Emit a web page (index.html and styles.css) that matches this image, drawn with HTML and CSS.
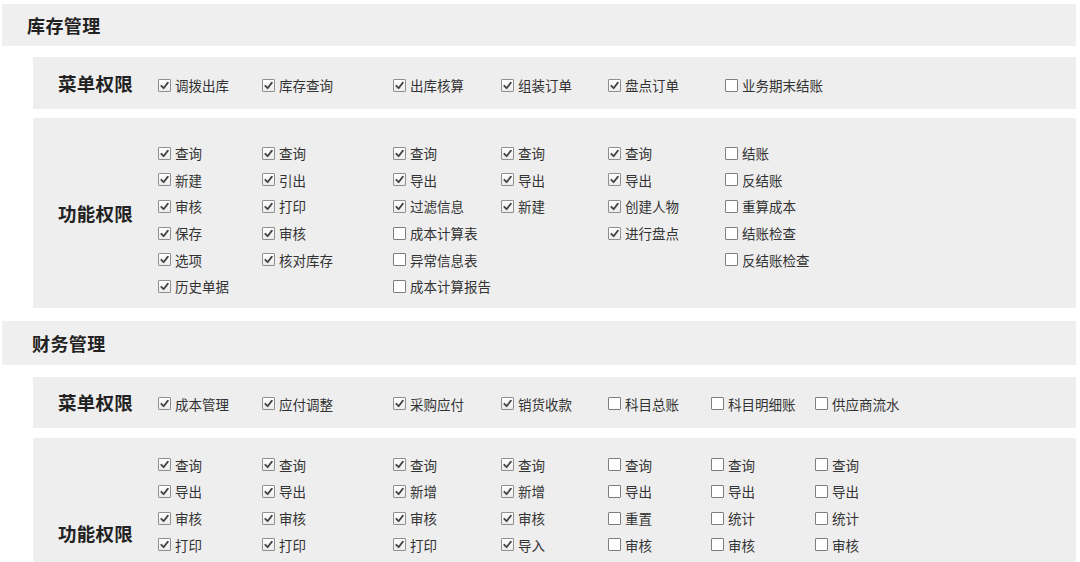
FILE: index.html
```html
<!DOCTYPE html>
<html lang="zh">
<head>
<meta charset="utf-8">
<link rel="stylesheet" href="styles.css">
</head>
<body>
<svg width="0" height="0" class="defs">
  <defs>
    <symbol id="ck" viewBox="0 0 11 11">
      <path d="M2.3 5.8 L4.6 8.2 L8.9 2.6" fill="none" stroke="#444" stroke-width="1.8" stroke-linecap="round" stroke-linejoin="round"/>
    </symbol>
  </defs>
</svg>

<section class="section s1">
  <div class="head h1">库存管理</div>
  <div class="box menu m1">
    <div class="label">菜单权限</div>
    <div class="cols c1">
      <div class="col"><div class="item on"><span class="cb"><svg><use href="#ck"/></svg></span>调拨出库</div></div>
      <div class="col"><div class="item on"><span class="cb"><svg><use href="#ck"/></svg></span>库存查询</div></div>
      <div class="col"><div class="item on"><span class="cb"><svg><use href="#ck"/></svg></span>出库核算</div></div>
      <div class="col"><div class="item on"><span class="cb"><svg><use href="#ck"/></svg></span>组装订单</div></div>
      <div class="col"><div class="item on"><span class="cb"><svg><use href="#ck"/></svg></span>盘点订单</div></div>
      <div class="col"><div class="item"><span class="cb"></span>业务期末结账</div></div>
    </div>
  </div>
  <div class="box func f1">
    <div class="label">功能权限</div>
    <div class="cols c1">
      <div class="col">
        <div class="item on"><span class="cb"><svg><use href="#ck"/></svg></span>查询</div>
        <div class="item on"><span class="cb"><svg><use href="#ck"/></svg></span>新建</div>
        <div class="item on"><span class="cb"><svg><use href="#ck"/></svg></span>审核</div>
        <div class="item on"><span class="cb"><svg><use href="#ck"/></svg></span>保存</div>
        <div class="item on"><span class="cb"><svg><use href="#ck"/></svg></span>选项</div>
        <div class="item on"><span class="cb"><svg><use href="#ck"/></svg></span>历史单据</div>
      </div>
      <div class="col">
        <div class="item on"><span class="cb"><svg><use href="#ck"/></svg></span>查询</div>
        <div class="item on"><span class="cb"><svg><use href="#ck"/></svg></span>引出</div>
        <div class="item on"><span class="cb"><svg><use href="#ck"/></svg></span>打印</div>
        <div class="item on"><span class="cb"><svg><use href="#ck"/></svg></span>审核</div>
        <div class="item on"><span class="cb"><svg><use href="#ck"/></svg></span>核对库存</div>
      </div>
      <div class="col">
        <div class="item on"><span class="cb"><svg><use href="#ck"/></svg></span>查询</div>
        <div class="item on"><span class="cb"><svg><use href="#ck"/></svg></span>导出</div>
        <div class="item on"><span class="cb"><svg><use href="#ck"/></svg></span>过滤信息</div>
        <div class="item"><span class="cb"></span>成本计算表</div>
        <div class="item"><span class="cb"></span>异常信息表</div>
        <div class="item"><span class="cb"></span>成本计算报告</div>
      </div>
      <div class="col">
        <div class="item on"><span class="cb"><svg><use href="#ck"/></svg></span>查询</div>
        <div class="item on"><span class="cb"><svg><use href="#ck"/></svg></span>导出</div>
        <div class="item on"><span class="cb"><svg><use href="#ck"/></svg></span>新建</div>
      </div>
      <div class="col">
        <div class="item on"><span class="cb"><svg><use href="#ck"/></svg></span>查询</div>
        <div class="item on"><span class="cb"><svg><use href="#ck"/></svg></span>导出</div>
        <div class="item on"><span class="cb"><svg><use href="#ck"/></svg></span>创建人物</div>
        <div class="item on"><span class="cb"><svg><use href="#ck"/></svg></span>进行盘点</div>
      </div>
      <div class="col">
        <div class="item"><span class="cb"></span>结账</div>
        <div class="item"><span class="cb"></span>反结账</div>
        <div class="item"><span class="cb"></span>重算成本</div>
        <div class="item"><span class="cb"></span>结账检查</div>
        <div class="item"><span class="cb"></span>反结账检查</div>
      </div>
    </div>
  </div>
</section>

<section class="section s2">
  <div class="head h2">财务管理</div>
  <div class="box menu m2">
    <div class="label">菜单权限</div>
    <div class="cols c2">
      <div class="col"><div class="item on"><span class="cb"><svg><use href="#ck"/></svg></span>成本管理</div></div>
      <div class="col"><div class="item on"><span class="cb"><svg><use href="#ck"/></svg></span>应付调整</div></div>
      <div class="col"><div class="item on"><span class="cb"><svg><use href="#ck"/></svg></span>采购应付</div></div>
      <div class="col"><div class="item on"><span class="cb"><svg><use href="#ck"/></svg></span>销货收款</div></div>
      <div class="col"><div class="item"><span class="cb"></span>科目总账</div></div>
      <div class="col"><div class="item"><span class="cb"></span>科目明细账</div></div>
      <div class="col"><div class="item"><span class="cb"></span>供应商流水</div></div>
    </div>
  </div>
  <div class="box func f2">
    <div class="label">功能权限</div>
    <div class="cols c2">
      <div class="col">
        <div class="item on"><span class="cb"><svg><use href="#ck"/></svg></span>查询</div>
        <div class="item on"><span class="cb"><svg><use href="#ck"/></svg></span>导出</div>
        <div class="item on"><span class="cb"><svg><use href="#ck"/></svg></span>审核</div>
        <div class="item on"><span class="cb"><svg><use href="#ck"/></svg></span>打印</div>
      </div>
      <div class="col">
        <div class="item on"><span class="cb"><svg><use href="#ck"/></svg></span>查询</div>
        <div class="item on"><span class="cb"><svg><use href="#ck"/></svg></span>导出</div>
        <div class="item on"><span class="cb"><svg><use href="#ck"/></svg></span>审核</div>
        <div class="item on"><span class="cb"><svg><use href="#ck"/></svg></span>打印</div>
      </div>
      <div class="col">
        <div class="item on"><span class="cb"><svg><use href="#ck"/></svg></span>查询</div>
        <div class="item on"><span class="cb"><svg><use href="#ck"/></svg></span>新增</div>
        <div class="item on"><span class="cb"><svg><use href="#ck"/></svg></span>审核</div>
        <div class="item on"><span class="cb"><svg><use href="#ck"/></svg></span>打印</div>
      </div>
      <div class="col">
        <div class="item on"><span class="cb"><svg><use href="#ck"/></svg></span>查询</div>
        <div class="item on"><span class="cb"><svg><use href="#ck"/></svg></span>新增</div>
        <div class="item on"><span class="cb"><svg><use href="#ck"/></svg></span>审核</div>
        <div class="item on"><span class="cb"><svg><use href="#ck"/></svg></span>导入</div>
      </div>
      <div class="col">
        <div class="item"><span class="cb"></span>查询</div>
        <div class="item"><span class="cb"></span>导出</div>
        <div class="item"><span class="cb"></span>重置</div>
        <div class="item"><span class="cb"></span>审核</div>
      </div>
      <div class="col">
        <div class="item"><span class="cb"></span>查询</div>
        <div class="item"><span class="cb"></span>导出</div>
        <div class="item"><span class="cb"></span>统计</div>
        <div class="item"><span class="cb"></span>审核</div>
      </div>
      <div class="col">
        <div class="item"><span class="cb"></span>查询</div>
        <div class="item"><span class="cb"></span>导出</div>
        <div class="item"><span class="cb"></span>统计</div>
        <div class="item"><span class="cb"></span>审核</div>
      </div>
    </div>
  </div>
</section>
</body>
</html>
```

FILE: styles.css
```css
html, body {
  margin: 0;
  padding: 0;
  background: #ffffff;
}
body {
  font-family: "Noto Sans CJK SC", "Noto Sans", sans-serif;
  color: #333333;
  padding: 4px 4px 0 2px;
}
.defs {
  position: absolute;
  width: 0;
  height: 0;
}
.section {
  display: flex;
  flex-direction: column;
}
.s2 {
  margin-top: 13px;
}
.head {
  background: #efefef;
  height: 42px;
  display: flex;
  align-items: center;
  font-size: 18px;
  font-weight: bold;
  color: #222222;
  letter-spacing: 0.4px;
}
.h1 {
  padding-left: 25px;
}
.h2 {
  height: 44px;
  padding-left: 30px;
}
.box {
  background: #eeeeee;
  margin-left: 31px;
  display: flex;
}
.menu {
  margin-top: 11px;
  height: 52px;
  box-sizing: border-box;
}
.menu .cols {
  padding: 15px 0 10px;
}
.m2 {
  margin-top: 12px;
  height: 51px;
}
.m2 .cols {
  padding-top: 14px;
}
.func {
  margin-top: 9px;
  box-sizing: border-box;
}
.f1 .cols {
  padding: 22px 0 8px;
}
.f2 {
  margin-top: 10px;
  min-height: 190px;
}
.f2 .cols {
  padding: 14px 0 15px;
}
.label {
  width: 125px;
  flex: none;
  display: flex;
  align-items: center;
  justify-content: center;
  font-size: 18.5px;
  font-weight: bold;
  color: #222222;
  letter-spacing: 0.3px;
}
.cols {
  display: grid;
  flex: 1;
  align-content: start;
}
.c1 {
  grid-template-columns: 104px 131px 108px 107px 117px 1fr;
}
.c2 {
  grid-template-columns: 104px 131px 108px 107px 103px 104px 1fr;
}
.col {
  display: flex;
  flex-direction: column;
}
.item {
  height: 26.6px;
  display: flex;
  align-items: center;
  font-size: 13.5px;
  color: #333333;
  white-space: nowrap;
}
.cb {
  width: 13px;
  height: 13px;
  box-sizing: border-box;
  border: 1px solid #7d7d7d;
  background: #ffffff;
  border-radius: 1px;
  margin-right: 4px;
  flex: none;
  display: flex;
}
.on .cb {
  border-color: #8f8f8f;
  background: linear-gradient(#ffffff, #ececec);
}
.cb svg {
  width: 11px;
  height: 11px;
}
```
